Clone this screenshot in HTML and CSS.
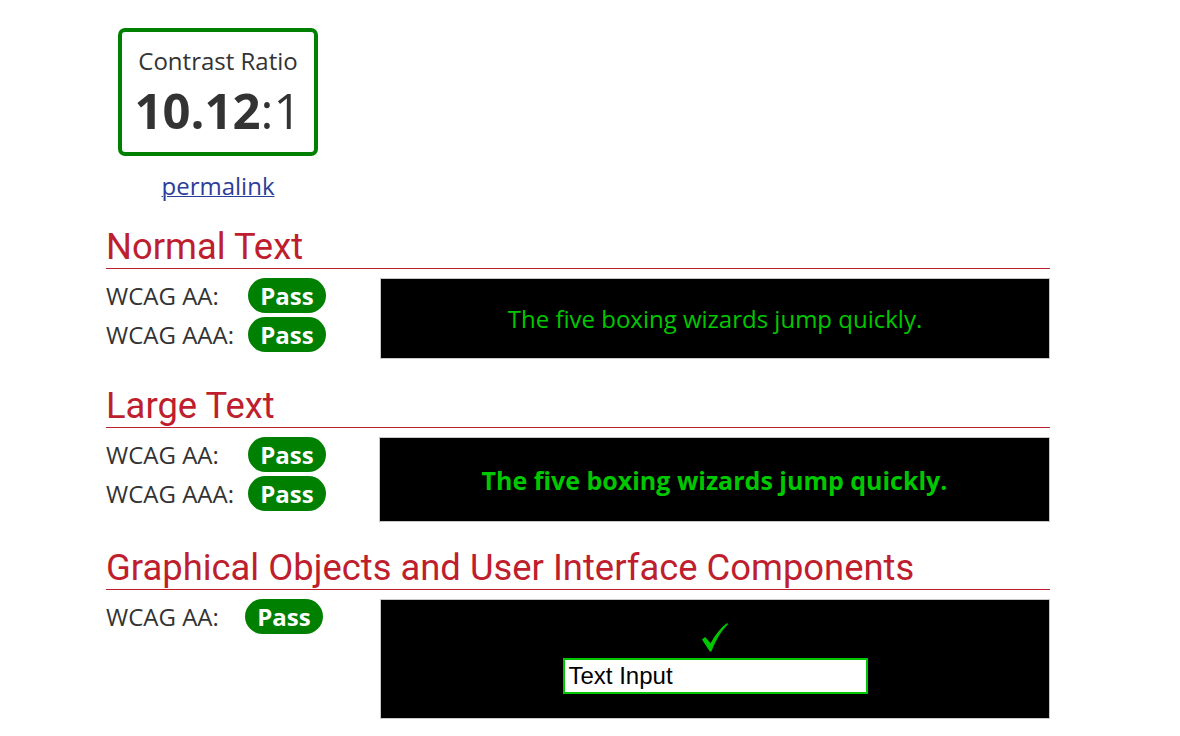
FILE: index.html
```html
<!DOCTYPE html>
<html lang="en">
<head>
<meta charset="utf-8">
<title>Contrast Checker</title>
<link rel="stylesheet" href="styles.css">
</head>
<body>
<main class="page">
  <div class="summary">
    <div class="ratio-box">
      <div class="ratio-label">Contrast Ratio</div>
      <div class="ratio-value"><b>10.12</b>:1</div>
    </div>
    <a class="permalink" href="#">permalink</a>
  </div>

  <section class="section sec-normal">
    <h2 class="heading">Normal Text</h2>
    <div class="row">
      <div class="results">
        <div class="result"><span class="label">WCAG AA:</span><span class="badge">Pass</span></div>
        <div class="result"><span class="label">WCAG AAA:</span><span class="badge">Pass</span></div>
      </div>
      <div class="sample sample-normal">The five boxing wizards jump quickly.</div>
    </div>
  </section>

  <section class="section sec-large">
    <h2 class="heading">Large Text</h2>
    <div class="row">
      <div class="results">
        <div class="result"><span class="label">WCAG AA:</span><span class="badge">Pass</span></div>
        <div class="result"><span class="label">WCAG AAA:</span><span class="badge">Pass</span></div>
      </div>
      <div class="sample sample-large">The five boxing wizards jump quickly.</div>
    </div>
  </section>

  <section class="section sec-ui">
    <h2 class="heading">Graphical Objects and User Interface Components</h2>
    <div class="row">
      <div class="results results-ui">
        <div class="result"><span class="label label-ui">WCAG AA:</span><span class="badge">Pass</span></div>
      </div>
      <div class="sample sample-ui">
        <svg class="check" width="26" height="29" viewBox="0 0 26 29" aria-hidden="true">
          <path d="M0 16.5 L3.2 14 L8.6 20.2 C13 12 18.5 5 25 0 L26 1.2 C19.6 7.6 13.8 16.6 9.4 28.6 L7.8 28.6 Z" fill="#00c800"/>
        </svg>
        <div class="text-input">Text Input</div>
      </div>
    </div>
  </section>
</main>
</body>
</html>
```

FILE: styles.css
```css
html, body {
  margin: 0;
  padding: 0;
  background: #ffffff;
}

body {
  font-family: "Open Sans", "Liberation Sans", sans-serif;
  color: #333333;
}

.page {
  width: 944px;
  margin-left: 106px;
  padding-top: 28px;
}

.summary {
  width: 224px;
  display: flex;
  flex-direction: column;
  align-items: center;
}

.ratio-box {
  box-sizing: border-box;
  width: 200px;
  height: 128px;
  border: 4px solid #008000;
  border-radius: 7px;
  display: flex;
  flex-direction: column;
  align-items: center;
  padding-top: 15px;
}

.ratio-label {
  font-size: 24px;
  line-height: 28px;
}

.ratio-value {
  font-size: 49px;
  line-height: 50px;
  margin-top: 10px;
}

.ratio-value b {
  font-weight: 700;
}

.permalink {
  margin-top: 15px;
  font-size: 24px;
  line-height: 30px;
  color: #2c3e99;
  text-decoration: underline;
  text-decoration-thickness: 1px;
}

.section {
  margin-top: 24px;
}

.sec-large {
  margin-top: 25px;
}

.sec-ui {
  margin-top: 24px;
}

.heading {
  margin: 0;
  font-family: Roboto, "Liberation Sans", sans-serif;
  font-weight: 400;
  font-size: 36.4px;
  line-height: 43px;
  color: #be1e2d;
  border-bottom: 1px solid #be1e2d;
}

.row {
  display: flex;
  margin-top: 9px;
}

.results {
  width: 274px;
  display: flex;
  flex-direction: column;
  gap: 4px;
}

.result {
  display: flex;
  align-items: center;
  height: 35px;
}

.label {
  width: 142px;
  font-size: 24px;
  line-height: 30px;
}

.label-ui {
  width: 139px;
}

.badge {
  box-sizing: border-box;
  width: 78px;
  height: 35px;
  border-radius: 18px;
  background: #008000;
  color: #ffffff;
  font-weight: 700;
  font-size: 24px;
  line-height: 35px;
  text-align: center;
}

.sample {
  box-sizing: border-box;
  width: 670px;
  background: #000000;
  border: 1px solid #c8c8c8;
  color: #00c800;
  display: flex;
  align-items: center;
  justify-content: center;
}

.sample-normal {
  height: 81px;
  font-size: 24px;
}

.sample-large {
  height: 85px;
  font-size: 25px;
  font-weight: 700;
  margin-left: -1px;
  width: 671px;
}

.sample-ui {
  height: 120px;
  flex-direction: column;
  justify-content: flex-start;
  padding-top: 23px;
}

.check {
  display: block;
}

.text-input {
  box-sizing: border-box;
  width: 305px;
  height: 36px;
  margin-top: 6px;
  background: #ffffff;
  border: 2px solid #00c800;
  color: #000000;
  font-family: "Liberation Sans", Arial, sans-serif;
  font-size: 24px;
  line-height: 32px;
  padding-left: 4px;
}
```
